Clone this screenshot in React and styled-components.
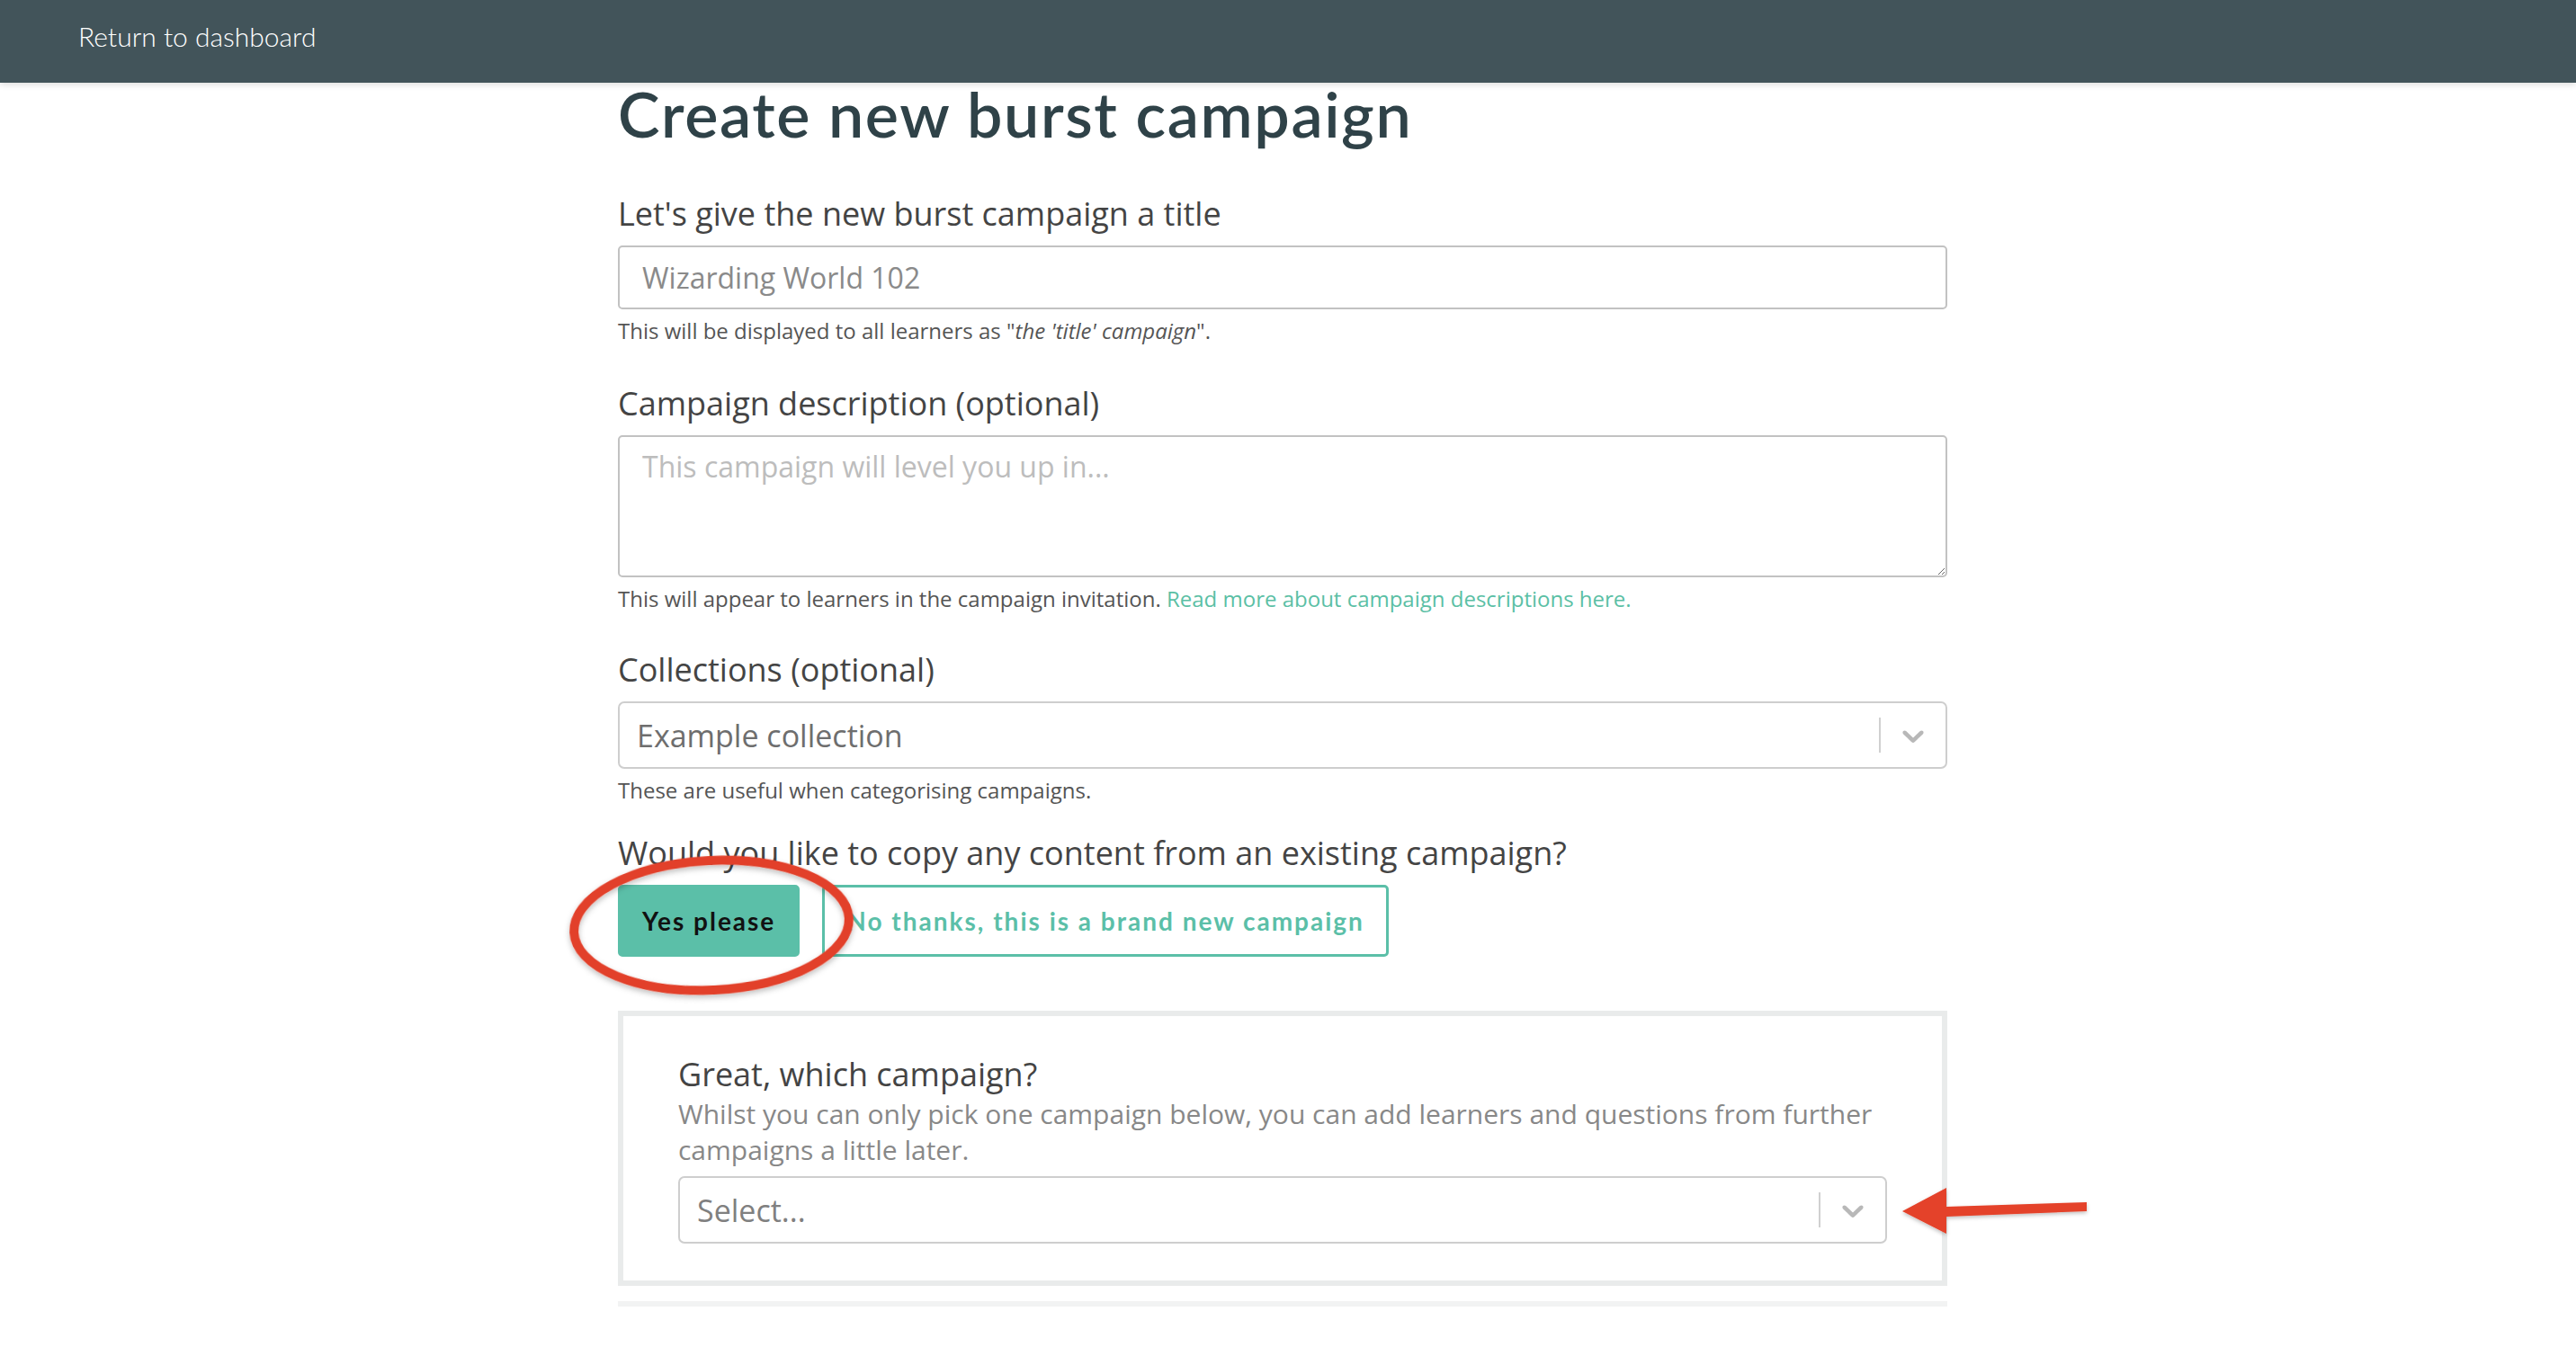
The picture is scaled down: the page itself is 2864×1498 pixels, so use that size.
import React from 'react'
import styled, { createGlobalStyle } from 'styled-components'

const GlobalStyle = createGlobalStyle`
  html, body {
    margin: 0;
    padding: 0;
    background: #fff;
  }
  body {
    font-family: "Open Sans", "Liberation Sans", sans-serif;
    color: #444;
  }
  * {
    box-sizing: border-box;
  }
`

const Chevron = () => (
  <svg width="40" height="40" viewBox="0 0 20 20" fill="#b8b8b8">
    <path d="M4.516 7.548c0.436-0.446 1.043-0.481 1.576 0l3.908 3.747 3.908-3.747c0.533-0.481 1.141-0.446 1.574 0 0.436 0.445 0.408 1.197 0 1.615-0.406 0.418-4.695 4.502-4.695 4.502-0.217 0.223-0.502 0.335-0.787 0.335s-0.57-0.112-0.789-0.335c0 0-4.287-4.084-4.695-4.502s-0.436-1.17 0-1.615z" />
  </svg>
)

const Dropdown = ({ value, muted, children }) => (
  <SelectBox>
    <SelectValue $muted={muted}>{value}</SelectValue>
    <Separator />
    <Indicator>
      <Chevron />
    </Indicator>
    {children}
  </SelectBox>
)

const App = () => (
  <>
    <GlobalStyle />
    <TopBar>
      <BackLink href="#">Return to dashboard</BackLink>
    </TopBar>

    <Main>
      <Title>Create new burst campaign</Title>

      <Field $gap={41}>
        <Label>Let's give the new burst campaign a title</Label>
        <TextInput defaultValue="Wizarding World 102" />
        <Help>
          This will be displayed to all learners as "<em>the 'title' campaign</em>".
        </Help>
      </Field>

      <Field $gap={39}>
        <Label>Campaign description (optional)</Label>
        <TextArea placeholder="This campaign will level you up in..." />
        <Help>
          This will appear to learners in the campaign invitation.{' '}
          <HelpLink href="#">Read more about campaign descriptions here.</HelpLink>
        </Help>
      </Field>

      <Field $gap={30}>
        <Label>Collections (optional)</Label>
        <Dropdown value="Example collection" />
        <Help>These are useful when categorising campaigns.</Help>
      </Field>

      <Label>Would you like to copy any content from an existing campaign?</Label>
      <ButtonRow>
        <Button $solid>Yes please</Button>
        <Button>No thanks, this is a brand new campaign</Button>
        <Circle viewBox="0 0 330 170">
          <defs>
            <filter id="circleShadow" x="-10%" y="-10%" width="120%" height="130%">
              <feDropShadow dx="0" dy="3" stdDeviation="3" floodColor="#000" floodOpacity="0.25" />
            </filter>
          </defs>
          <ellipse
            cx="164" cy="85" rx="153" ry="72"
            transform="rotate(-3 164 85)"
            fill="none" stroke="#e2412a" strokeWidth="10"
            filter="url(#circleShadow)"
          />
        </Circle>
      </ButtonRow>

      <Panel>
        <Label $tight>Great, which campaign?</Label>
        <Desc>
          Whilst you can only pick one campaign below, you can add learners and questions from further campaigns a little later.
        </Desc>
        <Dropdown value="Select..." muted>
          <Arrow viewBox="0 0 220 70">
            <defs>
              <filter id="arrowShadow" x="-10%" y="-20%" width="120%" height="150%">
                <feDropShadow dx="0" dy="2" stdDeviation="2" floodColor="#000" floodOpacity="0.25" />
              </filter>
            </defs>
            <polygon
              points="7,37 56,11 56,32 212,27 212,37 56,43 56,62"
              fill="#e4422a"
              filter="url(#arrowShadow)"
            />
          </Arrow>
        </Dropdown>
      </Panel>
      <Rule />
    </Main>
  </>
)

export default App

const TopBar = styled.header`
  height: 92px;
  background: #42545a;
  padding: 22px 0 0 87px;
  box-shadow: 0 2px 7px rgba(0, 0, 0, 0.14);
  position: relative;
  z-index: 1;
`

const BackLink = styled.a`
  font-family: Lato, "Liberation Sans", sans-serif;
  font-weight: 300;
  font-size: 30px;
  line-height: 1.2;
  color: #fff;
  text-decoration: none;
`

const Main = styled.main`
  width: 1478px;
  margin-left: 687px;
  padding-bottom: 40px;
`

const Title = styled.h1`
  font-family: Lato, "Liberation Sans", sans-serif;
  font-weight: 600;
  font-size: 70px;
  line-height: 1;
  letter-spacing: 1.6px;
  color: #2f4248;
  margin: -1px 0 53px;
`

const Field = styled.div`
  margin-bottom: ${p => p.$gap}px;
`

const Label = styled.div`
  font-size: 36px;
  line-height: 48px;
  color: #444;
  margin-bottom: ${p => (p.$tight ? 0 : 11)}px;
`

const TextInput = styled.input`
  display: block;
  width: 100%;
  height: 71px;
  border: 2px solid #c2c2c2;
  border-radius: 5px;
  padding: 0 25px;
  font-family: "Open Sans", sans-serif;
  font-size: 32px;
  color: #8a8a8a;
  outline: none;
`

const TextArea = styled.textarea`
  display: block;
  width: 100%;
  height: 158px;
  border: 2px solid #c2c2c2;
  border-radius: 5px;
  padding: 9px 25px;
  font-family: "Open Sans", sans-serif;
  font-size: 32px;
  line-height: 48px;
  color: #666;
  resize: vertical;
  outline: none;
  &::placeholder {
    color: #bdbdbd;
  }
`

const Help = styled.div`
  font-size: 24px;
  line-height: 32px;
  color: #555;
  margin-top: 8px;
`

const HelpLink = styled.a`
  color: #5bbfa5;
  text-decoration: none;
`

const SelectBox = styled.div`
  position: relative;
  display: flex;
  align-items: center;
  height: 75px;
  border: 2px solid #cecece;
  border-radius: 7px;
  padding-left: 19px;
  background: #fff;
`

const SelectValue = styled.span`
  flex: 1;
  font-size: 34px;
  color: ${p => (p.$muted ? '#808080' : '#6e6e6e')};
`

const Separator = styled.span`
  width: 2px;
  height: 39px;
  background: #d0d0d0;
`

const Indicator = styled.span`
  width: 72px;
  display: flex;
  align-items: center;
  justify-content: center;
`

const ButtonRow = styled.div`
  position: relative;
  display: flex;
  gap: 25px;
`

const Button = styled.button`
  height: 80px;
  padding: 0 24px;
  border-radius: 5px;
  border: 3px solid #5bbfa8;
  background: ${p => (p.$solid ? '#5bbfa8' : '#fff')};
  color: ${p => (p.$solid ? '#111' : '#5bbfa8')};
  font-family: Lato, "Liberation Sans", sans-serif;
  font-weight: 700;
  font-size: 28px;
  letter-spacing: 2px;
  cursor: pointer;
`

const Circle = styled.svg`
  position: absolute;
  left: -60px;
  top: -40px;
  width: 330px;
  height: 170px;
  overflow: visible;
  pointer-events: none;
`

const Panel = styled.section`
  margin-top: 60px;
  border: 6px solid #e9ebeb;
  padding: 41px 61px;
`

const Desc = styled.p`
  margin: 0 0 9px;
  font-size: 30px;
  line-height: 40px;
  color: #888;
`

const Arrow = styled.svg`
  position: absolute;
  left: calc(100% + 12px);
  top: 0;
  width: 220px;
  height: 70px;
  overflow: visible;
  pointer-events: none;
`

const Rule = styled.div`
  margin-top: 17px;
  height: 6px;
  background: #f2f3f3;
`
